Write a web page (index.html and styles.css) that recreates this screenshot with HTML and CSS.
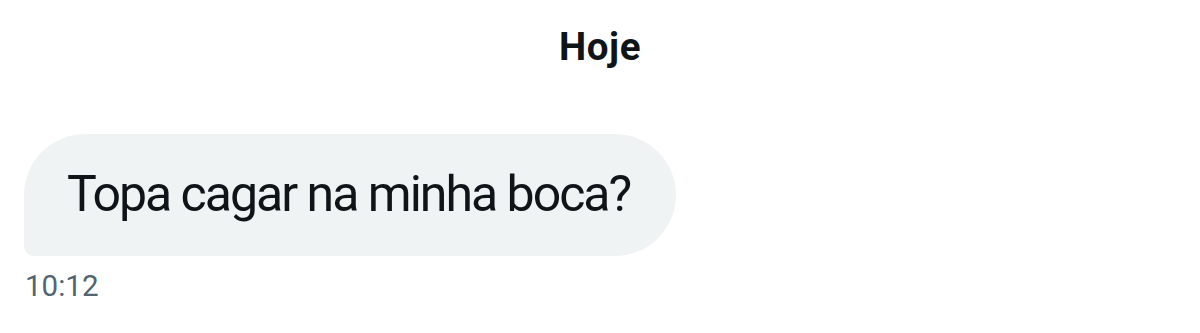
FILE: index.html
```html
<!DOCTYPE html>
<html lang="pt">
<head>
  <meta charset="UTF-8" />
  <title>Mensagens</title>
  <link rel="stylesheet" href="styles.css">
</head>
<body>
  <div class="chat">
    <div class="day">Hoje</div>
    <div class="msg">
      <div class="bubble">Topa cagar na minha boca?</div>
      <div class="time">10:12</div>
    </div>
  </div>
</body>
</html>
```
FILE: styles.css
```css
body {
  margin: 0;
  background: #fff;
  font-family: Roboto, 'Liberation Sans', sans-serif;
  color: #0f1419;
}
.chat {
  padding: 24px 24px 0 24px;
}
.day {
  text-align: center;
  font-weight: 700;
  font-size: 38.5px;
  line-height: 46px;
  letter-spacing: 0.6px;
}
.msg {
  margin-top: 64px;
  display: flex;
  flex-direction: column;
  align-items: flex-start;
}
.bubble {
  background: #eff3f4;
  font-size: 50px;
  line-height: 60px;
  padding: 30px 46px 32px 43px;
  border-radius: 61px 61px 61px 10px;
  letter-spacing: -2px;
}
.time {
  margin-top: 12px;
  margin-left: 1px;
  font-size: 29.5px;
  line-height: 36px;
  color: #536471;
}
```
